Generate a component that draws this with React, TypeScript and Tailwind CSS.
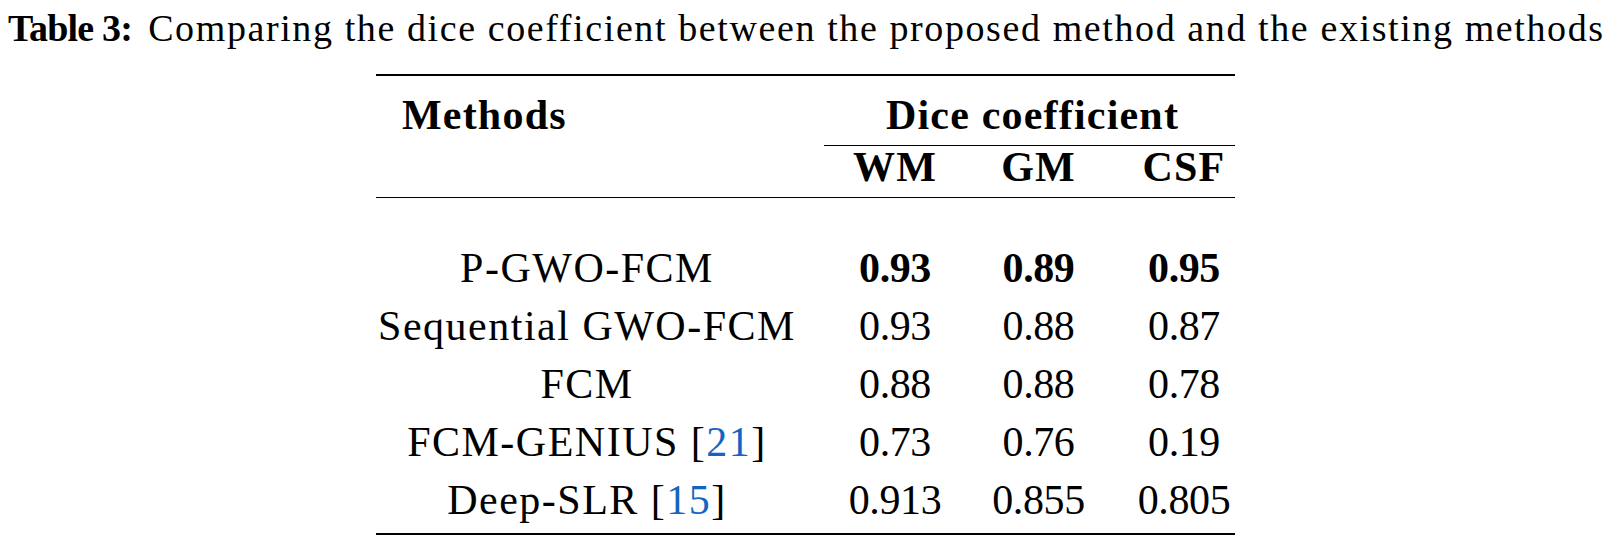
import React from "react";

type Row = {
  method: string;
  ref?: string;
  values: [string, string, string];
  best?: boolean;
};

const ROWS: Row[] = [
  { method: "P-GWO-FCM", values: ["0.93", "0.89", "0.95"], best: true },
  { method: "Sequential GWO-FCM", values: ["0.93", "0.88", "0.87"] },
  { method: "FCM", values: ["0.88", "0.88", "0.78"] },
  { method: "FCM-GENIUS", ref: "21", values: ["0.73", "0.76", "0.19"] },
  { method: "Deep-SLR", ref: "15", values: ["0.913", "0.855", "0.805"] },
];

export default function App() {
  return (
    <div className="h-[537px] w-[1609px] overflow-hidden bg-white font-['Liberation_Serif',serif] text-black">
      <p className="whitespace-nowrap pl-[8px] pt-[6px] text-[38px] leading-[44px]">
        <span className="font-bold tracking-[-0.8px]">Table 3:</span>
        <span className="ml-[16px] tracking-[1.6px]">
          Comparing the dice coefficient between the proposed method and the existing methods
        </span>
      </p>

      <div className="ml-[376px] mt-[24px] w-[859px] border-t-2 border-b-2 border-black text-[42px] leading-none">
        <div className="grid grid-cols-[448px_142px_145px_124px] font-bold tracking-[1.2px]">
          <div className="flex h-[70px] items-center pl-[26px] pt-[8px]">Methods</div>
          <div className="col-span-3 flex h-[70px] items-center justify-center border-b border-black pl-[6px] pt-[8px]">
            Dice coefficient
          </div>
        </div>

        <div className="grid h-[52px] grid-cols-[448px_142px_145px_124px] items-start border-b border-black pt-[0px] font-bold tracking-[1.2px]">
          <div />
          <div className="text-center">WM</div>
          <div className="text-center">GM</div>
          <div className="pl-[22px] text-center">CSF</div>
        </div>

        <div className="pt-[41px] pb-[4px]">
          {ROWS.map((row) => (
            <div
              key={row.method}
              className="grid h-[58px] grid-cols-[448px_142px_145px_124px] items-center"
            >
              <div className="pr-[26px] text-center whitespace-nowrap tracking-[1.5px]">
                {row.method}
                {row.ref && (
                  <>
                    {" "}[<span className="text-[#1565c0]">{row.ref}</span>]
                  </>
                )}
              </div>
              {row.values.map((v, i) => (
                <div
                  key={i}
                  className={`text-center tracking-[-0.4px] ${i === 2 ? "pl-[22px]" : ""} ${row.best ? "font-bold" : ""}`}
                >
                  {v}
                </div>
              ))}
            </div>
          ))}
        </div>
      </div>
    </div>
  );
}
